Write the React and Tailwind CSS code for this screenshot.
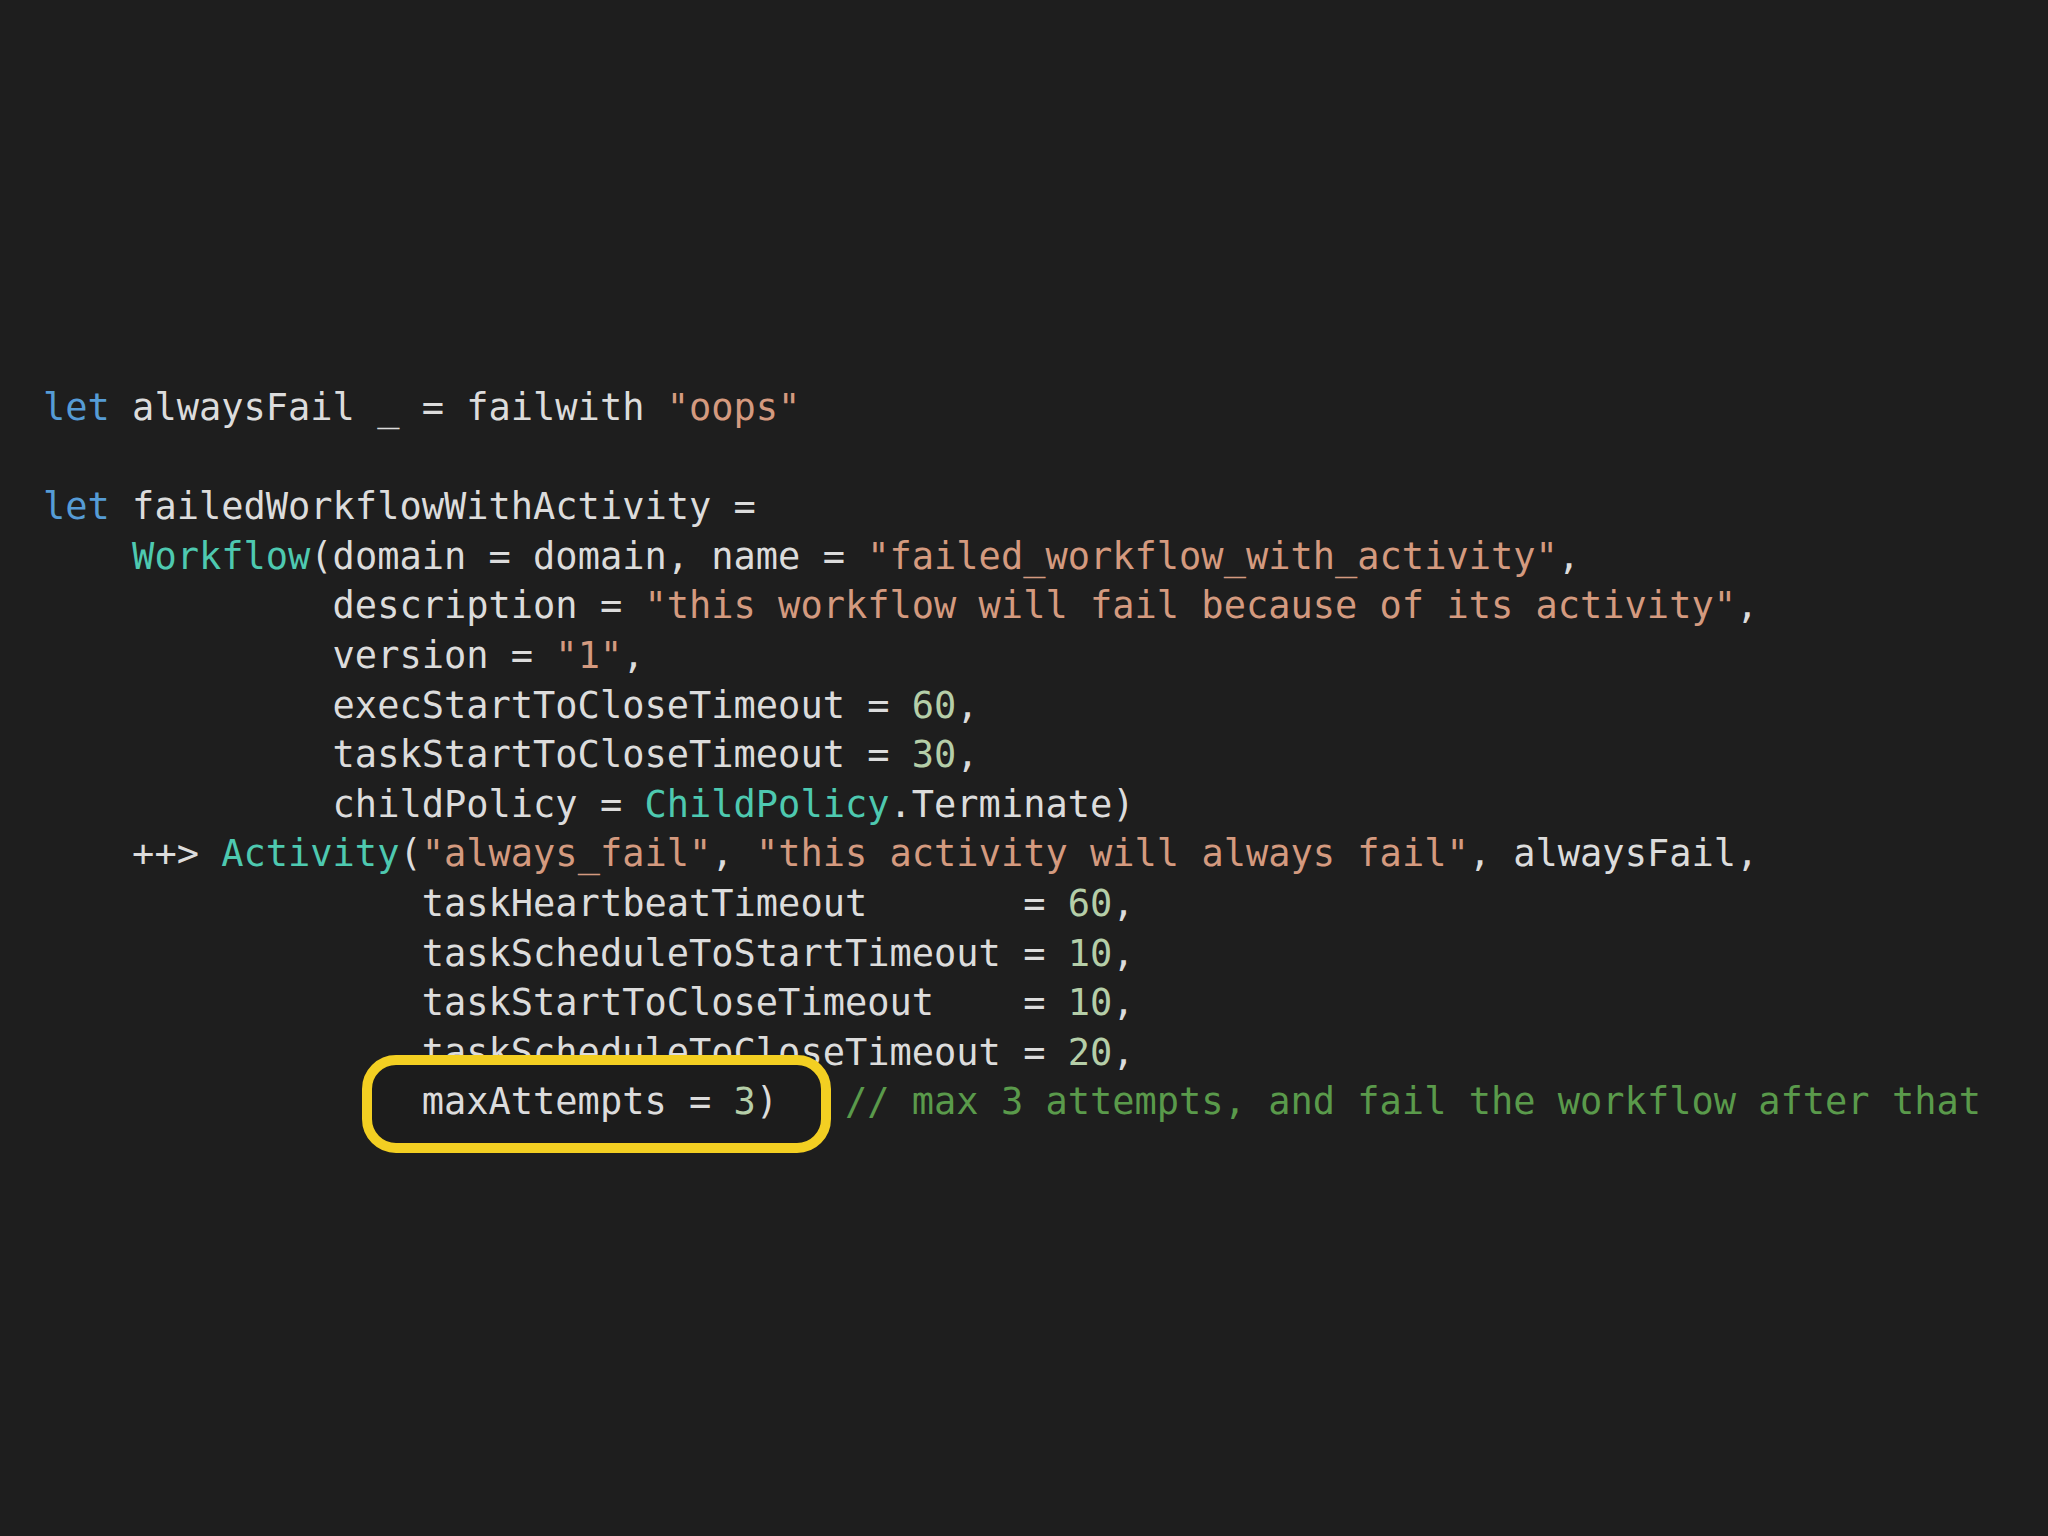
import React from "react";

const C = {
  kw: "text-[#569cd6]",
  ty: "text-[#4ec9b0]",
  st: "text-[#d49a7f]",
  nu: "text-[#b5cea8]",
  cm: "text-[#5a9a4b]",
};

// each line is a list of [text, colorClass?]
const lines = [
  [["let", C.kw], [" alwaysFail _ = failwith "], ['"oops"', C.st]],
  [],
  [["let", C.kw], [" failedWorkflowWithActivity ="]],
  [["    "], ["Workflow", C.ty], ["(domain = domain, name = "], ['"failed_workflow_with_activity"', C.st], [","]],
  [["             description = "], ['"this workflow will fail because of its activity"', C.st], [","]],
  [["             version = "], ['"1"', C.st], [","]],
  [["             execStartToCloseTimeout = "], ["60", C.nu], [","]],
  [["             taskStartToCloseTimeout = "], ["30", C.nu], [","]],
  [["             childPolicy = "], ["ChildPolicy", C.ty], [".Terminate)"]],
  [["    ++> "], ["Activity", C.ty], ["("], ['"always_fail"', C.st], [", "], ['"this activity will always fail"', C.st], [", alwaysFail,"]],
  [["                 taskHeartbeatTimeout       = "], ["60", C.nu], [","]],
  [["                 taskScheduleToStartTimeout = "], ["10", C.nu], [","]],
  [["                 taskStartToCloseTimeout    = "], ["10", C.nu], [","]],
  [["                 taskScheduleToCloseTimeout = "], ["20", C.nu], [","]],
];

const Line = ({ parts }) => (
  <div className="h-[49.6px] leading-[49.6px]">
    {parts.length === 0 ? " " : parts.map(([t, c], i) => (
      <span key={i} className={c}>{t}</span>
    ))}
  </div>
);

export default function App() {
  return (
    <div className="w-[2048px] h-[1536px] bg-[#1e1e1e] overflow-hidden">
      <div
        className="pt-[383px] pl-[43px] whitespace-pre text-[37px] text-[#dcdcdc]"
        style={{ fontFamily: '"DejaVu Sans Mono", "Liberation Mono", monospace' }}
      >
        {lines.map((p, i) => (
          <Line key={i} parts={p} />
        ))}

        {/* last line with the highlight box */}
        <div className="relative h-[49.6px] leading-[49.6px]">
          <div className="absolute left-[319px] top-[-22px] w-[469px] h-[98px] rounded-[34px] border-[10px] border-[#f3cf22] bg-[#1c1c1c]" />
          <span className="relative">
            {"                 maxAttempts = "}
            <span className={C.nu}>3</span>
            {")   "}
            <span className={C.cm}>// max 3 attempts, and fail the workflow after that</span>
          </span>
        </div>
      </div>
    </div>
  );
}
